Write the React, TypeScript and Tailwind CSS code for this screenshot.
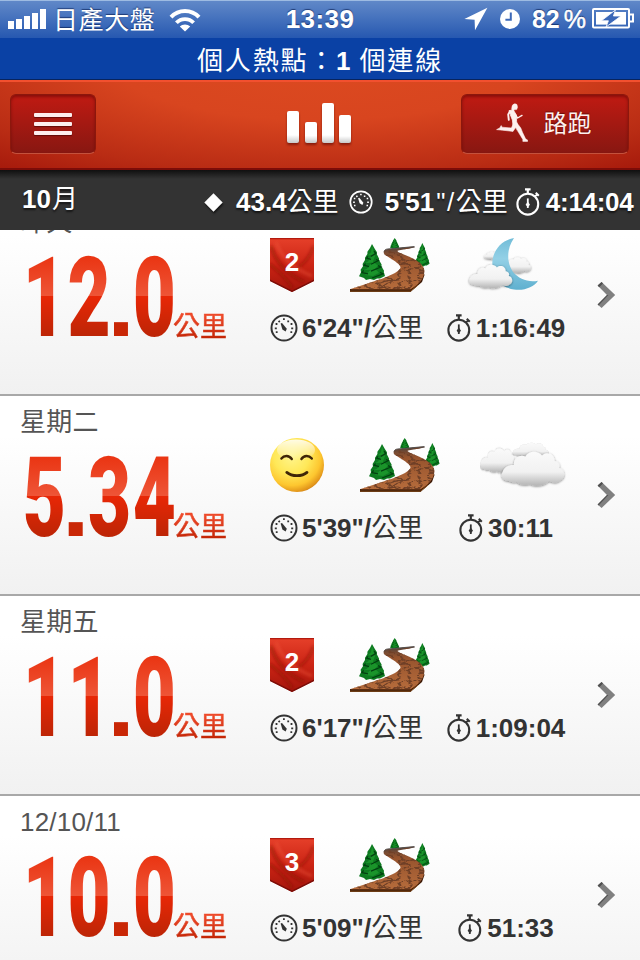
import React from 'react';

interface IconProps {
    className?: string;
}

interface Run {
    date: string;
    distance: string;
    pace: string;
    time: string;
    flag?: string;
    weather?: 'moon' | 'clouds';
}

const runs: Run[] = [
    { date: '昨天', distance: '12.0', pace: `6'24"/`, time: '1:16:49', flag: '2', weather: 'moon' },
    { date: '星期二', distance: '5.34', pace: `5'39"/`, time: '30:11', weather: 'clouds' },
    { date: '星期五', distance: '11.0', pace: `6'17"/`, time: '1:09:04', flag: '2' },
    { date: '12/10/11', distance: '10.0', pace: `5'09"/`, time: '51:33', flag: '3' },
];

const GaugeIcon: React.FC<IconProps> = ({ className }) => (
    <svg viewBox="0 0 28 28" className={className} fill="none" stroke="currentColor">
        <circle cx="14" cy="14" r="12.5" strokeWidth="2" />
        <path
            d="M4.8 14.4h2M5.6 10h1.8M8.6 6.8 9.8 8M13 5.2h1.8M18.2 6.4v1.8M20.6 10h1.8M21.2 14.4h2M20.4 18.2h1.8M5.8 18.2h1.8"
            strokeWidth="1.8"
        />
        <path d="M10.6 9.6 12 9 16.8 14.8 15.6 17.4 12.4 15.4Z" fill="currentColor" stroke="none" />
    </svg>
);

const StopwatchIcon: React.FC<IconProps> = ({ className }) => (
    <svg viewBox="0 0 24 28" className={className} fill="none" stroke="currentColor">
        <circle cx="11.8" cy="16.2" r="10.4" strokeWidth="2.1" />
        <path d="M9 1.4h5.6M11.8 1.6v4.2" strokeWidth="2.2" />
        <path d="M18.6 8.4 21.4 6.4" strokeWidth="1.8" />
        <path d="M19.8 4.8 22.8 7.8" strokeWidth="2" />
        <path d="M11.8 10.4v9.6" strokeWidth="1.8" />
        <path d="M11.8 13.4 14 16.8 11.8 19.2 9.6 16.8Z" fill="currentColor" stroke="none" />
    </svg>
);

const RunnerIcon: React.FC<IconProps> = ({ className }) => (
    <svg viewBox="0 0 32 39" className={className} fill="currentColor" stroke="currentColor" strokeLinecap="round" strokeLinejoin="round">
        <path d="M16.2 2.6C17 .8 19.6.3 21 1.6l.6 2.6-.8 2.4-2.4.2-1 1.6-2-1Z" strokeWidth=".4" />
        <path d="M13.4 7.6 17.8 7.8 20.4 12 20.6 18.4 21.6 22 17 22.6 16.4 17 14.4 12Z" strokeWidth=".8" />
        <path d="M14 8.2 12.2 11.4 12.8 16.8" fill="none" strokeWidth="1.9" />
        <path d="M19.4 12 21.6 15 26 12.4" fill="none" strokeWidth="1.4" />
        <path d="M17.2 21 15.4 25 6 24.2 5.2 22.6 3.8 25 .6 26.6 6.6 27.2 17 28.4 20.8 22.6Z" strokeWidth=".6" />
        <path d="M18 21.8 21.4 20.6 24.8 25 26.6 29.6 29.6 35.8 31.8 37.2 31.6 38.4 26.8 38.4 26.8 36.4 22.6 29.6Z" strokeWidth=".5" />
    </svg>
);

const FlagIcon: React.FC<{ level: string }> = ({ level }) => (
    <div className="relative h-[54px] w-11">
        <svg viewBox="0 0 44 54" className="h-full w-full">
            <defs>
                <linearGradient id="flag" x1="0" y1="0" x2="0" y2="1">
                    <stop offset="0" stopColor="#e6402a" />
                    <stop offset=".5" stopColor="#cb2414" />
                    <stop offset="1" stopColor="#a3150b" />
                </linearGradient>
                <filter id="fold" x="-.2" y="-.2" width="1.4" height="1.4">
                    <feGaussianBlur stdDeviation="1.6" />
                </filter>
                <clipPath id="flagShape">
                    <path d="M0 0H44V43L22 54 0 43Z" />
                </clipPath>
            </defs>
            <g clipPath="url(#flagShape)">
                <path d="M0 0H44V54H0Z" fill="url(#flag)" />
                <g filter="url(#fold)" fill="none">
                    <path d="M1 8C6 26 18 36 34 44" stroke="#8a0f07" strokeWidth="3.4" opacity=".55" />
                    <path d="M0 26C8 34 16 38 22 50" stroke="#8a0f07" strokeWidth="3.4" opacity=".5" />
                    <path d="M44 8C38 22 34 26 24 32" stroke="#8a0f07" strokeWidth="3.4" opacity=".45" />
                    <path d="M6 4C12 20 22 30 42 38" stroke="#ee5238" strokeWidth="3" opacity=".5" />
                </g>
            </g>
            <path d="M0 .6H44" stroke="#b3190e" strokeWidth="1.2" />
            <path d="M0 41.4 22 52.4 44 41.4V43L22 54 0 43Z" fill="#7a0e08" />
        </svg>
        <span className="absolute inset-x-0 top-[9px] text-center text-[26px] leading-[30px] font-bold text-white">{level}</span>
    </div>
);

const SmileIcon = () => (
    <svg viewBox="0 0 54 54" className="h-[54px] w-[54px]">
        <defs>
            <radialGradient id="face" cx=".4" cy=".34" r=".72">
                <stop offset="0" stopColor="#fff58c" />
                <stop offset=".45" stopColor="#ffe858" />
                <stop offset=".75" stopColor="#fdc62f" />
                <stop offset=".92" stopColor="#e2951a" />
                <stop offset="1" stopColor="#b86d10" />
            </radialGradient>
            <linearGradient id="shine" x1="0" y1="0" x2="0" y2="1">
                <stop offset="0" stopColor="#fff" stopOpacity=".85" />
                <stop offset="1" stopColor="#fff" stopOpacity="0" />
            </linearGradient>
        </defs>
        <circle cx="27" cy="27" r="27" fill="url(#face)" />
        <ellipse cx="26" cy="12" rx="19" ry="10.5" fill="url(#shine)" />
        <g fill="none" stroke="#3f2508" strokeWidth="2.4" strokeLinecap="round">
            <path d="M11.4 20.6C14 17.2 19 17 21.8 21M31.4 21C34 17 39 17.2 41.8 20.6" />
            <path d="M16.8 34.4C22 38.8 32 38.8 37 34.4" strokeWidth="2.8" />
        </g>
    </svg>
);

const Tree: React.FC<{ transform: string }> = ({ transform }) => (
    <g transform={transform}>
        <path
            d="M13 0 16 5 18 8 17.6 9.4 20 14 20 15.6 22.6 20 22.4 21.6 25 26 24.8 27.4 26 31 21 33.6 18 33.4 15 35 11 34 7 35 5 33 0 31.4 2 27.4 1.6 25 4 21.6 3.6 19.4 6 15.6 6 13.4 8.4 9.6 8.4 7.6 11 4Z"
            fill="#0d7a20"
        />
        <path d="M13 2 12 8 9 11 13 11 9 17 6 18.6 13 18 8 24 4 25.6 12 25 6 30 14 31 20 28 16 24 19 21 14 17 16 12Z" fill="#23a532" opacity=".6" />
        <path d="M15 7 17 9 12 12M9 12 7.6 13.8 12 15M17 15 19.4 16 12 19.6M6.6 19 5 20.6 10 22M19 21 22 22.4 12 26.4M4.6 25.6 3 27.8 9 29M21 27.6 24 29 13 33" fill="none" stroke="#034010" strokeWidth="1.2" />
    </g>
);

const trailPath =
    'M0 51.3 33.3 40.3C42 37 50 33 50.5 29.6 50.5 27 47 24.4 34.5 16.6 32.6 14 34 11.4 38 11L64.4 8.6 64.8 9.4 48 12.6C46 13.6 50 14.8 59.3 18.7 68 22.6 74.3 27 74.3 33 74.3 41 68 47 60.7 51.3Z';

const TrailIcon = () => (
    <svg viewBox="0 0 80 54" className="h-[54px] w-20">
        <defs>
            <filter id="bark" x="0" y="0" width="1" height="1">
                <feTurbulence type="turbulence" baseFrequency=".1 .22" numOctaves="3" seed="11" />
                <feColorMatrix values="0 0 0 0 .16  0 0 0 0 .05  0 0 0 0 .02  0 0 0 -7 2.1" />
                <feComposite in2="SourceGraphic" operator="in" />
            </filter>
            <linearGradient id="soil" x1="0" y1="0" x2="0" y2="1">
                <stop offset="0" stopColor="#4f4039" />
                <stop offset=".25" stopColor="#96532d" />
                <stop offset="1" stopColor="#b66c3c" />
            </linearGradient>
        </defs>
        <Tree transform="translate(40 0) scale(.36 .31)" />
        <Tree transform="translate(65 5) scale(.56 .67)" />
        <Tree transform="translate(9 6) scale(1 1.03)" />
        <path d="M0 51V54H60.5L72 44 74.5 37 73 33 60 50Z" fill="#3c1804" />
        <path d="M0 53.2H60.5L68 47" fill="none" stroke="#8d5420" strokeWidth=".9" />
        <path d={trailPath} fill="url(#soil)" />
        <path d={trailPath} filter="url(#bark)" />
        <path d="M34 13.4C35 11.4 36 11.2 38 11L64.4 8.6" fill="none" stroke="#55504e" strokeWidth="1" />
    </svg>
);

const CloudDefs = () => (
    <defs>
        <linearGradient id="cloud" x1="0" y1="0" x2="0" y2="1">
            <stop offset="0" stopColor="#fafafa" />
            <stop offset=".6" stopColor="#f1f1f1" />
            <stop offset="1" stopColor="#b4b4b4" />
        </linearGradient>
        <linearGradient id="moon" x1="0" y1="0" x2="0" y2="1">
            <stop offset="0" stopColor="#72bdd8" />
            <stop offset=".4" stopColor="#93d0e6" />
            <stop offset="1" stopColor="#5fb0cf" />
        </linearGradient>
        <filter id="puff" x="-.2" y="-.2" width="1.4" height="1.5">
            <feDropShadow dx="0" dy=".8" stdDeviation="1.2" floodColor="#000" floodOpacity=".5" />
        </filter>
    </defs>
);

const cloudPath =
    'M33 43C27 43 24 38 26.6 34 28 29 33 26.4 38 27 37 20 44 16 49.4 18.6 52 12.6 62 12 66 17.4 71 13 79 16 78.6 23 83 23.6 84.6 27 83 30 89 31 90.4 40 84 42.4 81 45.4 76 44.6 73 43 69 48 58 49 54 46 47 48 42 46 41 44 38 45 35 44 33 43Z';

const CloudsIcon = () => (
    <svg viewBox="0 0 92 54" className="h-[54px] w-[92px]">
        <CloudDefs />
        <path d={cloudPath} transform="translate(21.6 -1.4) scale(.58 .44)" fill="url(#cloud)" filter="url(#puff)" />
        <path d={cloudPath} transform="translate(-11.4 1) scale(.6 .7)" fill="url(#cloud)" filter="url(#puff)" />
        <path d={cloudPath} fill="url(#cloud)" filter="url(#puff)" />
    </svg>
);

const MoonIcon = () => (
    <svg viewBox="0 0 76 54" className="h-[54px] w-[76px]">
        <CloudDefs />
        <g fill="url(#cloud)" filter="url(#puff)">
            <path d={cloudPath} transform="translate(12 10.8) scale(.24 .22)" />
            <path d={cloudPath} transform="translate(26 13) scale(.44 .46)" />
        </g>
        <path d="M48 0C41 10 40 24 47 34 53 41 62 44.6 72 42.7 68 49 58 53 48 51.4 35 49.6 26.3 40 26.3 26 26.3 12 36 2 48 0Z" fill="url(#moon)" />
        <path d={cloudPath} transform="translate(-14.6 17.4) scale(.69)" fill="url(#cloud)" filter="url(#puff)" />
    </svg>
);

const ChevronIcon = () => (
    <svg viewBox="0 0 20 28" className="h-7 w-5">
        <path d="M.6 4.6 4.6 1 18.2 14 4.6 27 .6 23.4 10 14Z" fill="#808080" />
        <path d="M.6 4.6 4.6 1 6 2.4 2.2 6.2ZM.6 23.4 10 14 11.4 14 1.6 24.4Z" fill="#505050" />
    </svg>
);

const StatusBar = () => (
    <div className="flex h-[38px] items-center border-t border-[#9dbbe2] bg-gradient-to-b from-[#6088c8] to-[#2658b0] px-2 text-[26px] leading-[38px] text-white [text-shadow:0_-1px_1px_rgba(0,20,70,0.6)]">
        <div className="flex flex-1 items-center">
            <div className="-mt-[2px] flex h-5 items-end gap-[2px]">
                <span className="h-2 w-[6px] bg-white" />
                <span className="h-[10px] w-[6px] bg-white" />
                <span className="h-[13px] w-[6px] bg-white" />
                <span className="h-4 w-[6px] bg-white" />
                <span className="h-5 w-[6px] bg-white" />
            </div>
            <span className="ml-[7px] text-[25px] tracking-[0.6px]">日產大盤</span>
            <svg viewBox="0 0 32 24" className="ml-[14px] h-6 w-8" fill="none" stroke="#fff">
                <path d="M2 9.2C9.6 1 22.4 1 30 9.2" strokeWidth="4" />
                <path d="M7.4 14.8C12 9.8 20 9.8 24.6 14.8" strokeWidth="3.8" />
                <path d="M16 23.4 10.8 18.6C13.4 15.8 18.6 15.8 21.2 18.6Z" fill="#fff" stroke="none" />
            </svg>
        </div>
        <span className="-mt-px font-bold tracking-[0.4px]">13:39</span>
        <div className="-mt-[2px] flex flex-1 items-center justify-end">
            <svg viewBox="0 0 24 24" className="h-6 w-6" fill="#fff">
                <path d="M23.4.8 11 23.2 10.6 12.8.4 12Z" />
            </svg>
            <svg viewBox="0 0 20 20" className="ml-3 h-5 w-5">
                <circle cx="10" cy="10" r="10" fill="#fff" />
                <path d="M10.8 3.6V10.8H5.4" fill="none" stroke="#3d69b8" strokeWidth="2" />
            </svg>
            <span className="ml-3 text-[25px] font-bold">82</span>
            <span className="ml-1 text-[25px] [-webkit-text-stroke:0.5px_white]">%</span>
            <svg viewBox="0 0 42 21" className="ml-[6px] -mr-[2px] h-[21px] w-[42px]">
                <rect x="1" y="1" width="36" height="18.6" rx="1" fill="none" stroke="#fff" strokeWidth="2" />
                <rect x="4" y="4" width="30" height="12.6" fill="#fff" />
                <path d="M38 6.5h3v7h-3" fill="none" stroke="#fff" strokeWidth="2" />
                <path d="M23.4 2 9.4 12.8 16.4 12.8 14 19 29 8 21.4 8Z" fill="#3a67b7" stroke="#fff" strokeWidth=".8" />
            </svg>
        </div>
    </div>
);

const HotspotBar = () => (
    <div className="flex h-[42px] items-center justify-center border-b border-[#08245f] bg-[#0a41a5] pt-[5px] text-[26px] text-white">
        <span className="tracking-[1.8px]">個人熱點：</span>
        <span className="mr-[9px] font-bold">1</span>
        <span className="tracking-[1.8px]">個連線</span>
    </div>
);

const buttonClass =
    'flex h-[60px] items-center justify-center rounded-[6px] border border-[#8c170c] border-b-[#c4513c] bg-gradient-to-b from-[#c01a12] to-[#881711] shadow-[inset_0_2px_3px_rgba(70,0,0,0.45)]';

const barClass = 'h-1 w-[38px] rounded-[1px] bg-[#fdeeee] shadow-[0_1px_1px_rgba(60,0,0,0.6)]';

const Header = () => (
    <header className="flex h-[90px] items-start justify-between border-t-2 border-b-2 border-t-[#f2502f] border-b-[#7c0c08] bg-[radial-gradient(ellipse_80%_160%_at_50%_-20%,#dc4a20_0%,#d8451f_40%,#b92c14_78%,#a4180b_100%)] px-[10px] pt-3">
        <button className={`${buttonClass} w-[86px] flex-col gap-[5px]`} aria-label="Menu">
            <span className={barClass} />
            <span className={barClass} />
            <span className={barClass} />
        </button>
        <div className="ml-[81px] mt-[9px] flex h-10 items-end gap-[5px] drop-shadow-[0_2px_1px_rgba(70,0,0,0.5)]">
            <span className="mr-px h-8 w-3 rounded-[2px] bg-gradient-to-b from-white from-75% to-[#c8c8c8]" />
            <span className="h-[21px] w-3 rounded-[2px] bg-gradient-to-b from-white from-65% to-[#c8c8c8]" />
            <span className="h-10 w-3 rounded-[2px] bg-gradient-to-b from-white from-80% to-[#c8c8c8]" />
            <span className="h-7 w-3 rounded-[2px] bg-gradient-to-b from-white from-75% to-[#c8c8c8]" />
        </div>
        <button className={`${buttonClass} mr-px w-[168px] pr-[3px] text-[#fdf0ee]`}>
            <RunnerIcon className="-mt-1 h-[39px] w-8" />
            <span className="ml-4 text-[24px] leading-9 [text-shadow:0_-1px_1px_rgba(60,0,0,0.6)]">路跑</span>
        </button>
    </header>
);

const MonthBar = () => (
    <div className="relative z-10 flex h-[60px] items-center bg-[#333] bg-gradient-to-b from-black/70 to-transparent to-15% pl-[22px] pt-1 text-[26px] leading-10 text-white [text-shadow:0_2px_2px_rgba(0,0,0,0.6)]">
        <div className="-mt-[6px] w-[185px]">
            <span className="font-bold">10</span>
            <span className="ml-[1px]">月</span>
        </div>
        <span className="h-[13px] w-[13px] rotate-45 bg-white shadow-[2px_1px_2px_rgba(0,0,0,0.6)]" />
        <span className="ml-4 whitespace-nowrap">
            <span className="font-bold">43.4</span>公里
        </span>
        <GaugeIcon className="ml-[10px] h-6 w-6" />
        <span className="ml-3 whitespace-nowrap">
            <span className="font-bold">5'51</span>
            <span className="ml-[2px] tracking-[1.6px]">"/</span>公里
        </span>
        <StopwatchIcon className="ml-[8px] h-7 w-6" />
        <span className="ml-[6px] font-bold tracking-[-0.3px]">4:14:04</span>
    </div>
);

const Distance: React.FC<{ value: string }> = ({ value }) => {
    const [whole, fraction] = value.split('.');

    return (
        <span className="inline-block origin-left scale-x-[0.665] bg-[linear-gradient(to_bottom,#ea3513_14%,#ee5537_48.7%,#e82706_48.7%,#bd2506_84%)] bg-clip-text pl-[4px] font-[Roboto] text-[112px] leading-[113px] font-black tracking-[2.5px] whitespace-nowrap text-transparent [font-kerning:none]">
            {whole}
            <span className="mr-[5px] inline-block scale-x-[1.6] font-['Liberation_Sans'] text-[93px] leading-none font-bold tracking-normal text-[#c92706]">.</span>
            {fraction}
        </span>
    );
};

const RunRow: React.FC<{ run: Run }> = ({ run }) => (
    <li className="flex h-[200px] shrink-0 items-start border-b-2 border-[#a8a8a8] bg-gradient-to-b from-white from-20% to-[#f1f1f1]">
        <div className="w-[270px] shrink-0 pl-[20px] pt-[7px] text-[#555]">
            <div className="text-[26px] leading-[38px] tracking-[0.2px]">{run.date}</div>
            <div className="flex items-end">
                <div className="h-[105px] w-[153px] shrink-0">
                    <Distance value={run.distance} />
                </div>
                <span className="bg-gradient-to-b from-[#ee4a2a] from-20% to-[#c32404] to-80% bg-clip-text text-[27px] leading-[38px] text-transparent [-webkit-text-stroke:0.5px_transparent]">公里</span>
            </div>
        </div>
        <div className="w-[327px] shrink-0 pt-[42px]">
            <div className="flex h-[54px] gap-9">
                {run.flag ? <FlagIcon level={run.flag} /> : <SmileIcon />}
                <TrailIcon />
                {run.weather === 'moon' && <MoonIcon />}
                {run.weather === 'clouds' && <CloudsIcon />}
            </div>
            <div className="mt-4 flex items-center text-[26px] leading-10 text-[#333]">
                <GaugeIcon className="h-7 w-7" />
                <span className="ml-1 w-[144px] whitespace-nowrap">
                    <span className="font-bold">{run.pace}</span>公里
                </span>
                <div className="flex w-[120px] items-center justify-center">
                    <StopwatchIcon className="h-7 w-6" />
                    <span className="ml-[5px] font-bold">{run.time}</span>
                </div>
            </div>
        </div>
        <div className="pt-[85px]">
            <ChevronIcon />
        </div>
    </li>
);

export default function App() {
    return (
        <div className="flex h-[960px] w-[640px] flex-col overflow-hidden bg-white font-['Liberation_Sans','Noto_Sans_CJK_TC',sans-serif]">
            <StatusBar />
            <HotspotBar />
            <Header />
            <MonthBar />
            <ul className="-mt-[34px] flex min-h-0 flex-1 flex-col overflow-hidden">
                {runs.map((run) => (
                    <RunRow key={run.date} run={run} />
                ))}
            </ul>
        </div>
    );
}
